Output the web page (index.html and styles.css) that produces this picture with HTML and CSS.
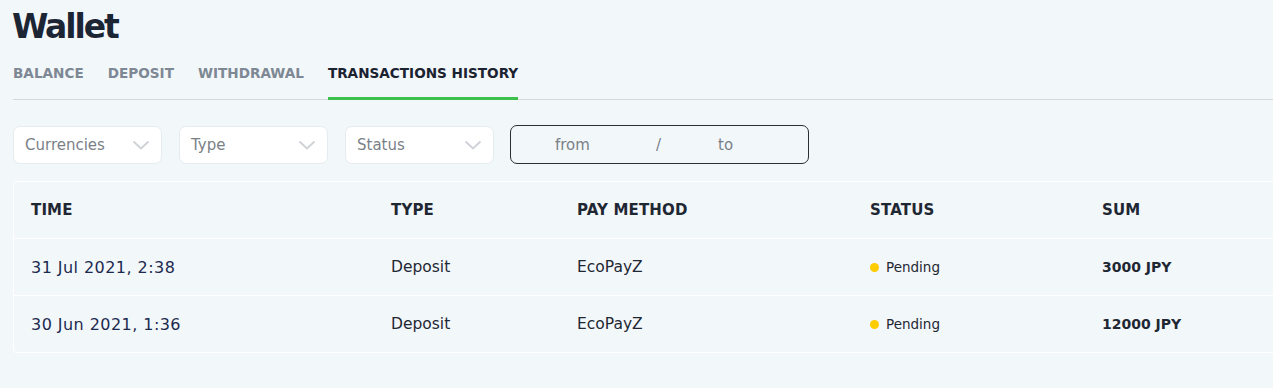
FILE: index.html
```html
<!DOCTYPE html>
<html lang="en">
<head>
<meta charset="utf-8">
<title>Wallet</title>
<link rel="stylesheet" href="styles.css">
</head>
<body>
<main class="page">
  <h1 class="title">Wallet</h1>
  <nav class="tabs">
    <a class="tab">BALANCE</a>
    <a class="tab">DEPOSIT</a>
    <a class="tab">WITHDRAWAL</a>
    <a class="tab active">TRANSACTIONS HISTORY</a>
  </nav>
  <div class="filters">
    <div class="select"><span>Currencies</span><svg class="chev" width="18" height="10" viewBox="0 0 18 10"><path d="M1.5 1.5 L9 8.5 L16.5 1.5" fill="none" stroke="#cfd3d8" stroke-width="2"/></svg></div>
    <div class="select"><span>Type</span><svg class="chev" width="18" height="10" viewBox="0 0 18 10"><path d="M1.5 1.5 L9 8.5 L16.5 1.5" fill="none" stroke="#cfd3d8" stroke-width="2"/></svg></div>
    <div class="select"><span>Status</span><svg class="chev" width="18" height="10" viewBox="0 0 18 10"><path d="M1.5 1.5 L9 8.5 L16.5 1.5" fill="none" stroke="#cfd3d8" stroke-width="2"/></svg></div>
    <div class="dates"><span class="from">from</span><span class="slash">/</span><span class="to">to</span></div>
  </div>
  <div class="table">
    <div class="row head">
      <div class="cell">TIME</div>
      <div class="cell">TYPE</div>
      <div class="cell">PAY METHOD</div>
      <div class="cell">STATUS</div>
      <div class="cell">SUM</div>
    </div>
    <div class="row">
      <div class="cell time">31 Jul 2021, 2:38</div>
      <div class="cell">Deposit</div>
      <div class="cell">EcoPayZ</div>
      <div class="cell status"><i class="dot"></i>Pending</div>
      <div class="cell sum">3000 JPY</div>
    </div>
    <div class="row">
      <div class="cell time">30 Jun 2021, 1:36</div>
      <div class="cell">Deposit</div>
      <div class="cell">EcoPayZ</div>
      <div class="cell status"><i class="dot"></i>Pending</div>
      <div class="cell sum">12000 JPY</div>
    </div>
  </div>
</main>
</body>
</html>
```
FILE: styles.css
```css
html, body {
  margin: 0;
  padding: 0;
  background: #f2f7fa;
  overflow: hidden;
}
body {
  font-family: "DejaVu Sans", Verdana, sans-serif;
  color: #1f2733;
}
.page {
  width: 1300px;
  padding: 0 0 0 13px;
}
.title {
  margin: 0 0 0 -1px;
  padding-top: 7px;
  height: 51px;
  box-sizing: border-box;
  font-size: 33px;
  line-height: 40px;
  font-weight: 700;
  color: #1c2533;
  letter-spacing: -2.1px;
}
.tabs {
  display: flex;
  gap: 24px;
  height: 49px;
  border-bottom: 1px solid #d6dadd;
  box-sizing: border-box;
}
.tab {
  font-size: 13.6px;
  font-weight: 700;
  color: #7d8894;
  line-height: 44px;
}
.tab.active {
  color: #1b2230;
  border-bottom: 3px solid #3cc04b;
  margin-bottom: -1px;
}
.filters {
  display: flex;
  gap: 17px;
  padding-top: 26px;
  height: 38px;
}
.select {
  width: 149px;
  height: 38px;
  box-sizing: border-box;
  background: #fff;
  border: 1px solid #e6ebef;
  border-radius: 7px;
  display: flex;
  align-items: center;
  justify-content: space-between;
  padding: 0 11px 0 11px;
  font-size: 15px;
  color: #7a7f87;
}
.chev { display: block; }
.dates {
  margin-left: -1px;
  margin-top: -1px;
  width: 299px;
  height: 39px;
  box-sizing: border-box;
  border: 1px solid #2b2e33;
  border-radius: 7px;
  display: flex;
  align-items: center;
  font-size: 15px;
  color: #7a7f87;
}
.from { margin-left: 44px; width: 101px; }
.slash { width: 62px; }
.table {
  margin-top: 17px;
  border: 1px solid #ffffff;
  border-right: 0;
  border-radius: 4px 0 0 4px;
}
.row {
  display: grid;
  grid-template-columns: 360px 186px 293px 232px 1fr;
  height: 57px;
  align-items: center;
  border-top: 1px solid #ffffff;
  box-sizing: border-box;
  font-size: 15.5px;
  color: #1f2733;
}
.row.head {
  border-top: 0;
  height: 56px;
}
.cell { padding-left: 17px; white-space: nowrap; }
.head .cell {
  font-size: 15px;
  font-weight: 700;
  letter-spacing: 0.15px;
  color: #1f2733;
}
.time {
  color: #1c2a4f;
  font-size: 16px;
  letter-spacing: 0.45px;
}
.status {
  font-size: 13.5px;
  display: flex;
  align-items: center;
}
.dot {
  display: inline-block;
  width: 9px;
  height: 9px;
  border-radius: 50%;
  background: #ffcc00;
  margin-right: 7px;
}
.sum {
  font-size: 14px;
  font-weight: 700;
}
```
